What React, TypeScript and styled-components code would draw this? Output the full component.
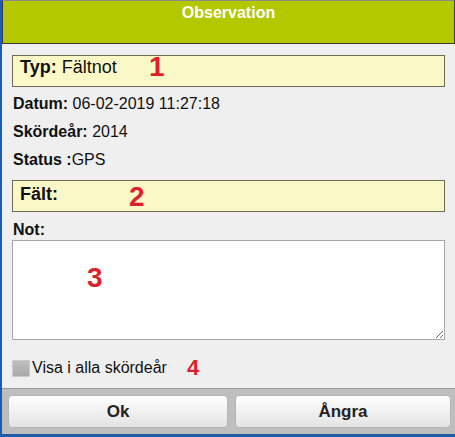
import React from "react";
import styled, { createGlobalStyle } from "styled-components";

const Global = createGlobalStyle`
  html, body { margin: 0; padding: 0; background: #efefef; }
  body { font-family: "Liberation Sans", Arial, sans-serif; color: #111; }
  * { box-sizing: border-box; }
`;

const Dialog = styled.div`
  width: 455px;
  height: 437px;
  display: flex;
  flex-direction: column;
  background: #efefef;
  border-left: 2px solid #1f5ca9;
  border-bottom: 3px solid #1f5ca9;
  overflow: hidden;
`;

const Header = styled.header`
  height: 44px;
  flex: none;
  background: #b4c800;
  border: 1px solid #3b3b3b;
  border-top-color: #8a8a8a;
  color: #fff;
  font-weight: bold;
  font-size: 16px;
  line-height: 18px;
  text-align: center;
  padding-top: 3px;
`;

const Body = styled.main`
  flex: 1;
  padding: 11px 10px 0 10px;
  display: flex;
  flex-direction: column;
`;

const Highlight = styled.div<{ $mt?: number }>`
  position: relative;
  height: 32px;
  margin-top: ${(p) => p.$mt ?? 0}px;
  background: #f9f8c6;
  border: 1px solid #6f6c55;
  padding: ${(p) => (p.$mt ? 2 : 0)}px 0 0 7px;
  font-size: 18px;
  line-height: 22px;
`;

const Bold = styled.b`
  font-weight: bold;
`;

const InfoList = styled.div`
  margin-top: 3px;
  display: flex;
  flex-direction: column;
`;

const InfoRow = styled.div`
  height: 28px;
  line-height: 28px;
  font-size: 16px;
  padding-left: 1px;
`;

const Label = styled.label`
  display: block;
  margin-top: 8px;
  font-size: 16px;
  font-weight: bold;
  line-height: 20px;
  padding-left: 1px;
`;

const NoteWrap = styled.div`
  position: relative;
  height: 100px;
`;

const NoteArea = styled.textarea`
  display: block;
  width: 100%;
  height: 100px;
  margin: 0;
  border: 1px solid #a6a6a6;
  background: #fff;
  font-family: "Liberation Sans", Arial, sans-serif;
  font-size: 16px;
  resize: vertical;
  outline: none;
`;

const CheckRow = styled.div`
  margin-top: 16px;
  height: 24px;
  display: flex;
  align-items: center;
  font-size: 16px;
`;

const CheckBox = styled.span`
  width: 18px;
  height: 17px;
  margin-right: 2px;
  background: linear-gradient(#bdbdbd, #a9a9a9);
  border: 1px solid #c9c9c9;
  border-radius: 1px;
`;

const Marker = styled.span<{ $size: number; $x?: number; $y?: number; $inline?: boolean }>`
  position: ${(p) => (p.$inline ? "static" : "absolute")};
  left: ${(p) => p.$x ?? 0}px;
  top: ${(p) => p.$y ?? 0}px;
  margin-left: ${(p) => (p.$inline ? 20 : 0)}px;
  color: #e01f2d;
  font-weight: bold;
  font-size: ${(p) => p.$size}px;
  line-height: 1;
  pointer-events: none;
`;

const Footer = styled.footer`
  flex: none;
  border-top: 1px solid #9a9a9a;
  background: #bebebe;
  padding: 6px 4px 6px 6px;
  display: grid;
  grid-template-columns: 220px 1fr;
  gap: 7px;
`;

const Button = styled.button`
  height: 33px;
  border: 1px solid #b5b5b5;
  border-radius: 4px;
  background: linear-gradient(#fefefe, #e3e3e3);
  font-family: "Liberation Sans", Arial, sans-serif;
  font-weight: bold;
  font-size: 17px;
  color: #222;
  padding: 0;
`;

export default function App() {
  return (
    <>
      <Global />
      <Dialog>
        <Header>Observation</Header>
        <Body>
          <Highlight>
            <Bold>Typ:</Bold> Fältnot
            <Marker $size={28} $x={136} $y={-3}>1</Marker>
          </Highlight>
          <InfoList>
            <InfoRow>
              <Bold>Datum:</Bold> 06-02-2019 11:27:18
            </InfoRow>
            <InfoRow>
              <Bold>Skördeår:</Bold> 2014
            </InfoRow>
            <InfoRow>
              <Bold>Status :</Bold>GPS
            </InfoRow>
          </InfoList>
          <Highlight $mt={6}>
            <Bold>Fält:</Bold>
            <Marker $size={28} $x={116} $y={2}>2</Marker>
          </Highlight>
          <Label>Not:</Label>
          <NoteWrap>
            <NoteArea />
            <Marker $size={28} $x={75} $y={24}>3</Marker>
          </NoteWrap>
          <CheckRow>
            <CheckBox />
            Visa i alla skördeår
            <Marker $size={22} $inline>4</Marker>
          </CheckRow>
        </Body>
        <Footer>
          <Button>Ok</Button>
          <Button>Ångra</Button>
        </Footer>
      </Dialog>
    </>
  );
}
